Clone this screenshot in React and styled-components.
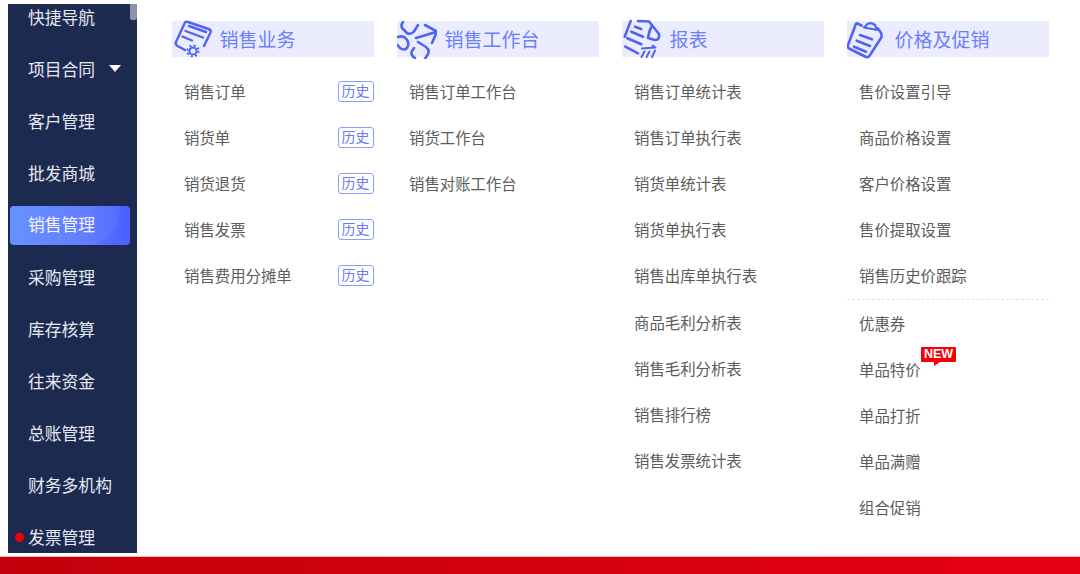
import React from "react";
import styled, { createGlobalStyle } from "styled-components";

const Global = createGlobalStyle`
  html, body { margin: 0; padding: 0; background: #fff; }
  body { font-family: "Noto Sans CJK SC", "Noto Sans", sans-serif; }
`;

const Page = styled.div`
  width: 1080px;
  height: 574px;
  display: flex;
  flex-direction: column;
  overflow: hidden;
`;
const Main = styled.div`
  flex: none;
  height: 557px;
  display: flex;
  align-items: flex-start;
`;
const Sidebar = styled.nav`
  position: relative;
  flex: none;
  width: 129px;
  height: 549px;
  margin: 4px 0 0 8px;
  background: #1c2a4f;
  overflow: hidden;
`;
const Thumb = styled.div`
  position: absolute;
  top: 0;
  right: 0;
  width: 7px;
  height: 16px;
  background: #8b93a8;
  border-radius: 0 0 2px 2px;
`;
const NavList = styled.div`
  margin-top: -13px;
  display: flex;
  flex-direction: column;
`;
const NavItem = styled.div`
  position: relative;
  box-sizing: border-box;
  height: 52px;
  display: flex;
  align-items: center;
  padding: 0 0 1px 20px;
  font-size: 16.8px;
  color: #e6e9f2;
`;
const ActivePill = styled.div`
  position: absolute;
  left: 2px;
  top: 7px;
  width: 120px;
  height: 39px;
  border-radius: 4px;
  overflow: hidden;
  display: flex;
  align-items: center;
  padding: 0 0 3px 18px;
  box-sizing: border-box;
  color: #f2f4ff;
  background: linear-gradient(90deg, #5f8cff 0%, #5c78ff 60%, #4c5fff 100%);
  &::after {
    content: "";
    position: absolute;
    left: -60px;
    top: -45px;
    width: 170px;
    height: 100px;
    border-radius: 50%;
    background: rgba(255, 255, 255, 0.05);
  }
`;
const Caret = styled.span`
  margin-left: 14px;
  width: 0;
  height: 0;
  border-left: 6.5px solid transparent;
  border-right: 6.5px solid transparent;
  border-top: 7.5px solid #fff;
`;
const Dot = styled.span`
  position: absolute;
  left: 7px;
  top: 21.5px;
  width: 9px;
  height: 9px;
  border-radius: 50%;
  background: #f40008;
`;
const Content = styled.div`
  flex: none;
  margin: 21px 0 0 35px;
  display: grid;
  grid-template-columns: repeat(4, 201.5px);
  column-gap: 23.5px;
`;
const Column = styled.section`
  display: flex;
  flex-direction: column;
`;
const Head = styled.header`
  position: relative;
  box-sizing: border-box;
  height: 36px;
  background: #ebedff;
  margin-bottom: 10.6px;
  display: flex;
  align-items: center;
  padding: 0 0 1px 47.5px;
  font-size: 19px;
  color: #6d7dfb;
`;
const IconWrap = styled.svg`
  position: absolute;
  left: 0;
  top: -2px;
  width: 40px;
  height: 40px;
  fill: none;
  stroke: #4f63f5;
  stroke-width: 2.4;
  stroke-linecap: round;
  stroke-linejoin: round;
`;
const Row = styled.div`
  height: 46.2px;
  display: flex;
  align-items: center;
  justify-content: space-between;
  padding-left: 12px;
  font-size: 15.4px;
  color: #5c5c5c;
`;
const Label = styled.span`
  position: relative;
`;
const Badge = styled.span`
  box-sizing: border-box;
  width: 36px;
  height: 21px;
  margin-top: 1px;
  border: 1.5px solid #8d9cff;
  border-radius: 3px;
  font-size: 14px;
  line-height: 17px;
  text-align: center;
  color: #6a7bf5;
`;
const Divider = styled.div`
  height: 0;
  border-top: 1px dashed #e3e3e3;
`;
const NewTag = styled.span`
  position: absolute;
  left: 62px;
  top: -11px;
  width: 35px;
  height: 15px;
  background: #f30008;
  border-radius: 1px;
  color: #fff;
  font-family: "Liberation Sans", sans-serif;
  font-size: 12.5px;
  font-weight: 700;
  line-height: 15px;
  text-align: center;
  &::after {
    content: "";
    position: absolute;
    left: 13px;
    top: 15px;
    border-top: 4px solid #f30008;
    border-right: 6px solid transparent;
  }
`;
const Footer = styled.footer`
  flex: none;
  height: 17px;
  background: linear-gradient(90deg, #c3000b 0%, #e60012 100%);
  box-shadow: 0 -1px 0 #f2b8bc;
`;

const IconSales = () => (
  <IconWrap viewBox="0 0 40 40">
    <path d="M13 31 L5.5 27 Q3 25.5 4 23 L12.5 4.5 Q13.5 2 16 3 L36.5 10 Q39.5 11 38.5 13.5 L32 27" />
    <path d="M17 7 L34 13 M13.5 12 L31 18.5 M10.5 17.5 L20 21.5" />
    <circle cx="21" cy="32" r="3.6" strokeWidth="2" />
    <circle cx="21" cy="32" r="5.6" strokeDasharray="2 2.4" strokeLinecap="butt" strokeWidth="2" />
  </IconWrap>
);
const IconDesk = () => (
  <IconWrap viewBox="0 0 40 40">
    <path d="M6 3 Q3 7 6 10 L10 14 Q14 16 17 12.5 L21 6" strokeWidth="2.6" />
    <path d="M1 18 Q6 16 9.5 20 Q13 25 10 29 Q7 32 3 29 L0.5 26" strokeWidth="2.6" />
    <path d="M21 23 L29 28 Q33 31 31 35 L28 40 M18 39 Q13 36 15 32 L17 29" strokeWidth="2.6" />
    <path d="M19 19 L39 13 M28 6 L40 12.5 L35 24" strokeWidth="2.6" />
  </IconWrap>
);
const IconReport = () => (
  <IconWrap viewBox="0 0 40 40">
    <path d="M8.7 2 L2.7 17.7 M16 2 L27 2.5 L37 15 Q38 21 33 21 L26 19 Q27 12 29.5 7.5" strokeWidth="2.6" />
    <path d="M13 7.7 L19.3 10 M9.3 12.7 L21 17.7 M5.3 19.3 L19.3 25.3 M3.3 27.7 L16 34.3" strokeWidth="2.6" />
    <path d="M20 29.5 L33 28.5 M30.5 26.5 L33.5 28.5 M22.5 32.5 L19.5 38 M27.5 32.5 L24.5 38 M33 31.5 L30 38" strokeWidth="2" />
  </IconWrap>
);
const IconPrice = () => (
  <IconWrap viewBox="0 0 40 40">
    <path d="M14.7 6.7 L10.5 4.5 Q9 4 8.5 6 L1 26 Q0 28.5 3 30 L19 38 Q21.5 39 23 36 L34 19 Q35.5 16 33.5 13 L31 9.5" strokeWidth="2.6" />
    <path d="M17 8.5 L20.5 5 Q24 3 28 6 L30.3 11 Z" strokeWidth="2.2" />
    <path d="M13 16 L25 20.3 M9.7 21.7 L23 27 M7 27.7 L19 32.7" strokeWidth="2.6" />
  </IconWrap>
);

const navItems = ["快捷导航", "项目合同", "客户管理", "批发商城", "销售管理", "采购管理", "库存核算", "往来资金", "总账管理", "财务多机构", "发票管理"];

const columns = [
  { title: "销售业务", Icon: IconSales, groups: [["销售订单", "销货单", "销货退货", "销售发票", "销售费用分摊单"]], history: true },
  { title: "销售工作台", Icon: IconDesk, groups: [["销售订单工作台", "销货工作台", "销售对账工作台"]] },
  { title: "报表", Icon: IconReport, groups: [["销售订单统计表", "销售订单执行表", "销货单统计表", "销货单执行表", "销售出库单执行表", "商品毛利分析表", "销售毛利分析表", "销售排行榜", "销售发票统计表"]] },
  { title: "价格及促销", Icon: IconPrice, groups: [["售价设置引导", "商品价格设置", "客户价格设置", "售价提取设置", "销售历史价跟踪"], ["优惠券", "单品特价", "单品打折", "单品满赠", "组合促销"]] },
];

export default function App() {
  return (
    <Page>
      <Global />
      <Main>
        <Sidebar>
          <NavList>
            {navItems.map((name) => (
              <NavItem key={name}>
                {name === "销售管理" ? <ActivePill>{name}</ActivePill> : name}
                {name === "项目合同" && <Caret />}
                {name === "发票管理" && <Dot />}
              </NavItem>
            ))}
          </NavList>
          <Thumb />
        </Sidebar>
        <Content>
          {columns.map(({ title, Icon, groups, history }) => (
            <Column key={title}>
              <Head>
                <Icon />
                {title}
              </Head>
              {groups.map((items, g) => (
                <React.Fragment key={g}>
                  {g > 0 && <Divider />}
                  {items.map((item) => (
                    <Row key={item}>
                      <Label>
                        {item}
                        {item === "单品特价" && <NewTag>NEW</NewTag>}
                      </Label>
                      {history && <Badge>历史</Badge>}
                    </Row>
                  ))}
                </React.Fragment>
              ))}
            </Column>
          ))}
        </Content>
      </Main>
      <Footer />
    </Page>
  );
}
